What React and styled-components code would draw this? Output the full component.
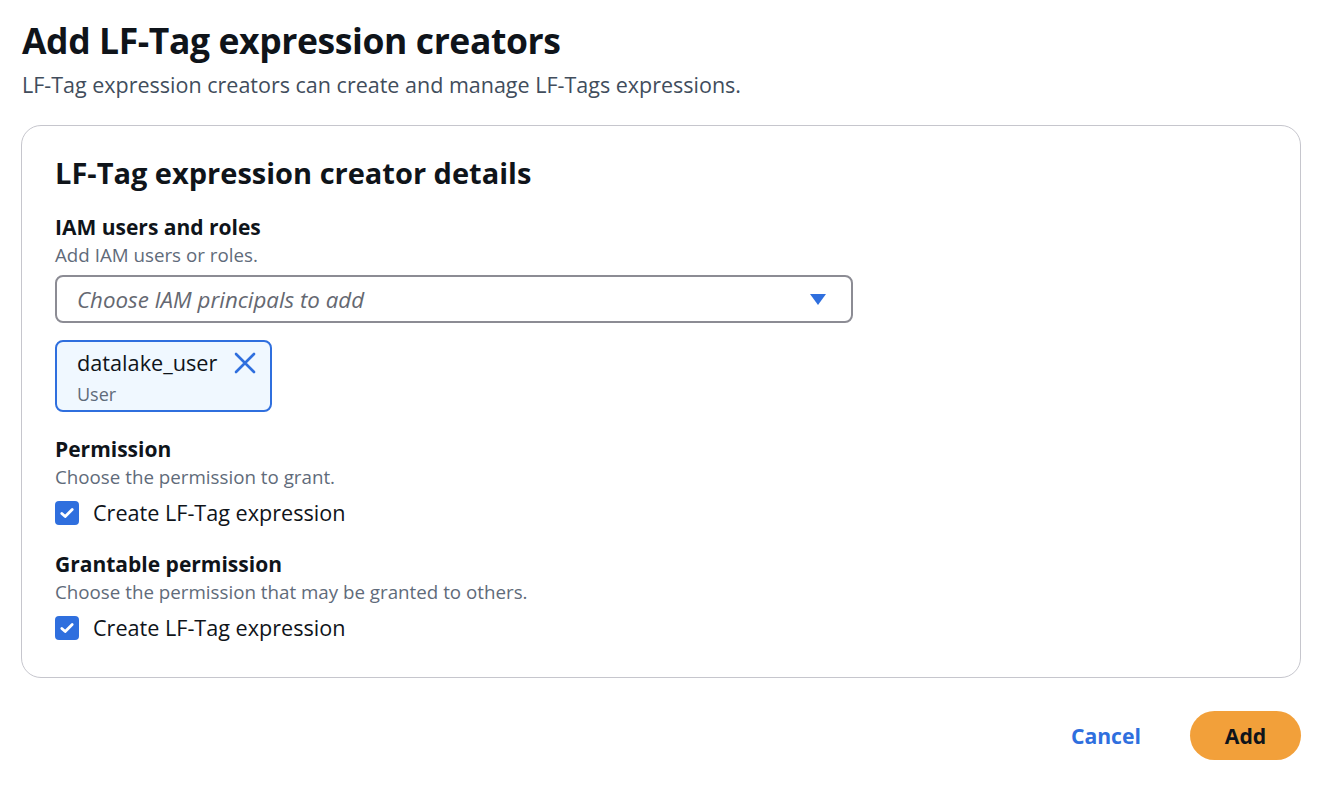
import styled, { createGlobalStyle } from "styled-components";

const GlobalStyle = createGlobalStyle`
  body {
    margin: 0;
    background: #ffffff;
    font-family: "Open Sans", "Noto Sans", sans-serif;
    color: #0f141a;
  }
`;

const Page = styled.div`
  padding: 16px 32px 40px 21px;
  width: 1332px;
  box-sizing: border-box;
`;

const Title = styled.h1`
  margin: 0 0 0 1px;
  font-size: 35.5px;
  font-weight: 700;
  letter-spacing: -0.4px;
  line-height: 48px;
`;

const Subtitle = styled.p`
  margin: 6px 0 0 1px;
  font-size: 21.5px;
  line-height: 30px;
  color: #414d5c;
`;

const Card = styled.section`
  margin-top: 25px;
  width: 1280px;
  box-sizing: border-box;
  border: 1px solid #c6c6cd;
  border-radius: 20px;
  padding: 27px 33px 34px;
`;

const CardTitle = styled.h2`
  margin: 0;
  font-size: 29px;
  font-weight: 700;
  line-height: 40px;
`;

const Field = styled.div`
  margin-top: ${(p) => p.$top}px;
  display: flex;
  flex-direction: column;
`;

const Label = styled.div`
  font-size: 21px;
  font-weight: 700;
  line-height: 28px;
`;

const Desc = styled.div`
  font-size: 18.75px;
  line-height: 26px;
  color: #5f6b7a;
  margin-top: 1px;
`;

const Select = styled.div`
  margin-top: 7px;
  width: 798px;
  height: 48px;
  box-sizing: border-box;
  border: 2px solid #8c8c94;
  border-radius: 8px;
  display: flex;
  align-items: center;
  justify-content: space-between;
  padding: 0 24px 0 20px;
`;

const Placeholder = styled.span`
  font-size: 22.3px;
  font-style: italic;
  color: #656871;
`;

const Token = styled.div`
  margin-top: 17px;
  align-self: flex-start;
  width: 217px;
  height: 72px;
  box-sizing: border-box;
  border: 2px solid #2f6fde;
  border-radius: 8px;
  background: #f0f8ff;
  padding: 6px 14px 0 20px;
  display: grid;
  grid-template-columns: 1fr auto;
`;

const TokenName = styled.div`
  font-size: 21.7px;
  line-height: 30px;
  color: #0f141a;
`;

const TokenType = styled.div`
  grid-column: 1 / 2;
  font-size: 18px;
  line-height: 26px;
  color: #5f6b7a;
`;

const Remove = styled.span`
  display: flex;
  align-items: center;
  height: 30px;
`;

const CheckRow = styled.label`
  margin-top: 8px;
  display: flex;
  align-items: center;
  gap: 14px;
  font-size: 21.6px;
  line-height: 30px;
`;

const Box = styled.span`
  width: 24px;
  height: 24px;
  border-radius: 4px;
  background: #2f6fde;
  display: flex;
  align-items: center;
  justify-content: center;
`;

const Footer = styled.div`
  margin-top: 33px;
  width: 1280px;
  display: flex;
  justify-content: flex-end;
  align-items: center;
  gap: 49px;
`;

const LinkButton = styled.button`
  border: none;
  background: none;
  padding: 0;
  font-family: inherit;
  font-size: 21.2px;
  font-weight: 700;
  color: #2f6fde;
`;

const PrimaryButton = styled.button`
  border: none;
  background: #f2a03a;
  width: 111px;
  height: 49px;
  border-radius: 25px;
  font-family: inherit;
  font-size: 21.2px;
  font-weight: 700;
  color: #0f141a;
`;

const Check = () => (
  <Box>
    <svg width="16" height="16" viewBox="0 0 16 16">
      <path d="M2.8 8.4l3.4 3.2L13.2 4.4" fill="none" stroke="#fff" strokeWidth="2.8" strokeLinecap="round" strokeLinejoin="round" />
    </svg>
  </Box>
);

export default function App() {
  return (
    <Page>
      <GlobalStyle />
      <Title>Add LF-Tag expression creators</Title>
      <Subtitle>LF-Tag expression creators can create and manage LF-Tags expressions.</Subtitle>
      <Card>
        <CardTitle>LF-Tag expression creator details</CardTitle>
        <Field $top={20}>
          <Label>IAM users and roles</Label>
          <Desc>Add IAM users or roles.</Desc>
          <Select>
            <Placeholder>Choose IAM principals to add</Placeholder>
            <svg width="18" height="13" viewBox="0 0 18 13">
              <path d="M1 1h16L9 12z" fill="#2f6fde" />
            </svg>
          </Select>
          <Token>
            <TokenName>datalake_user</TokenName>
            <Remove>
              <svg width="22" height="22" viewBox="0 0 22 22">
                <path d="M2 2l18 18M20 2L2 20" stroke="#2f6fde" strokeWidth="2.6" strokeLinecap="round" />
              </svg>
            </Remove>
            <TokenType>User</TokenType>
          </Token>
        </Field>
        <Field $top={23}>
          <Label>Permission</Label>
          <Desc>Choose the permission to grant.</Desc>
          <CheckRow>
            <Check />
            Create LF-Tag expression
          </CheckRow>
        </Field>
        <Field $top={22}>
          <Label>Grantable permission</Label>
          <Desc>Choose the permission that may be granted to others.</Desc>
          <CheckRow>
            <Check />
            Create LF-Tag expression
          </CheckRow>
        </Field>
      </Card>
      <Footer>
        <LinkButton>Cancel</LinkButton>
        <PrimaryButton>Add</PrimaryButton>
      </Footer>
    </Page>
  );
}
